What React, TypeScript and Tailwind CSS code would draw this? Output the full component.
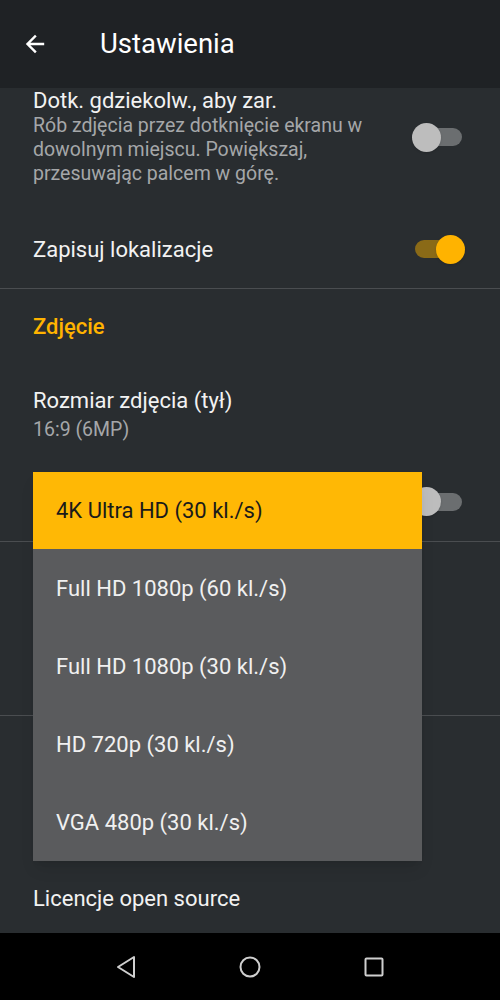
import React from "react";

const videoOptions = [
  "4K Ultra HD (30 kl./s)",
  "Full HD 1080p (60 kl./s)",
  "Full HD 1080p (30 kl./s)",
  "HD 720p (30 kl./s)",
  "VGA 480p (30 kl./s)",
];

function Toggle({ on }: { on: boolean }) {
  return (
    <div className="relative w-[52px] h-[30px] flex items-center">
      <div
        className={
          on
            ? "absolute left-[2px] right-[2px] h-[18px] rounded-full bg-[#8a6a17]"
            : "absolute left-[2px] right-[2px] h-[18px] rounded-full bg-[#6b6e70]"
        }
      />
      <div
        className={
          on
            ? "absolute right-0 w-[29px] h-[29px] rounded-full bg-[#ffb300] shadow"
            : "absolute left-0 w-[29px] h-[29px] rounded-full bg-[#bdbdbd] shadow"
        }
      />
    </div>
  );
}

function Divider() {
  return <div className="h-px bg-[#4a4d50]" />;
}

export default function App() {
  return (
    <div
      className="relative w-[500px] h-[1000px] overflow-hidden bg-[#292d30] flex flex-col"
      style={{ fontFamily: "Roboto, 'Noto Sans', sans-serif" }}
    >
      {/* toolbar */}
      <div className="h-[88px] shrink-0 bg-[#1f2225] flex items-center">
        <svg width="24" height="24" viewBox="0 0 24 24" className="ml-[23px]">
          <path
            d="M20 12H5M12 4.5 4.5 12 12 19.5"
            fill="none"
            stroke="#ffffff"
            strokeWidth="2.4"
            strokeLinecap="square"
          />
        </svg>
        <span className="ml-[53px] text-[27.5px] text-white">Ustawienia</span>
      </div>

      {/* settings list */}
      <div className="flex-1 flex flex-col">
        <div className="flex items-center pl-[33px] pr-[36px] pb-[24px]">
          <div className="flex-1">
            <div className="text-[22px] leading-[26px] text-[#f2f2f2]">
              Dotk. gdziekolw., aby zar.
            </div>
            <div className="text-[19.5px] leading-[24px] text-[#a5a7a9] w-[350px]">
              Rób zdjęcia przez dotknięcie ekranu w dowolnym miejscu. Powiększaj,
              przesuwając palcem w górę.
            </div>
          </div>
          <Toggle on={false} />
        </div>

        <div className="h-[78px] flex items-center pl-[33px] pr-[35px]">
          <div className="flex-1 text-[22px] text-[#f2f2f2]">Zapisuj lokalizacje</div>
          <Toggle on={true} />
        </div>
        <Divider />

        <div className="h-[79px] flex items-center pl-[33px]">
          <span className="text-[22px] font-medium text-[#ffb300] -mt-[4px]">Zdjęcie</span>
        </div>

        <div className="h-[94px] flex flex-col justify-center pl-[33px]">
          <div className="text-[22px] leading-[26px] text-[#f2f2f2]">Rozmiar zdjęcia (tył)</div>
          <div className="text-[19.5px] leading-[24px] text-[#a5a7a9] mt-[4px]">16:9 (6MP)</div>
        </div>

        {/* rows hidden behind the open menu */}
        <div className="h-[79px] flex items-center justify-end pr-[36px]">
          <Toggle on={false} />
        </div>
        <Divider />
        <div className="h-[173px]" />
        <Divider />
        <div className="h-[144px]" />

        <div className="flex-1 flex items-start pl-[33px] pt-[22px]">
          <span className="text-[22px] text-[#f2f2f2]">Licencje open source</span>
        </div>
      </div>

      {/* navigation bar */}
      <div className="h-[67px] shrink-0 bg-black flex items-center justify-center gap-[88px]">
        <svg width="36" height="36" viewBox="0 0 36 36">
          <path d="M26 8v20L10 18z" fill="none" stroke="#cfcfcf" strokeWidth="2" strokeLinejoin="round" />
        </svg>
        <svg width="36" height="36" viewBox="0 0 36 36">
          <circle cx="18" cy="18" r="9.5" fill="none" stroke="#cfcfcf" strokeWidth="2" />
        </svg>
        <svg width="36" height="36" viewBox="0 0 36 36">
          <rect x="9.5" y="9.5" width="17" height="17" rx="1" fill="none" stroke="#cfcfcf" strokeWidth="2" />
        </svg>
      </div>

      {/* dropdown overlay */}
      <div className="absolute left-[33px] top-[472px] w-[389px] bg-[#5a5b5d] shadow-lg flex flex-col">
        {videoOptions.map((opt, i) => (
          <div
            key={opt}
            className={
              i === 0
                ? "h-[77px] flex items-center pl-[23px] bg-[#ffb805] text-[22px] text-[#1a1a1a]"
                : "h-[78px] flex items-center pl-[23px] text-[22px] text-[#f0f0f0]"
            }
          >
            {opt}
          </div>
        ))}
      </div>
    </div>
  );
}
